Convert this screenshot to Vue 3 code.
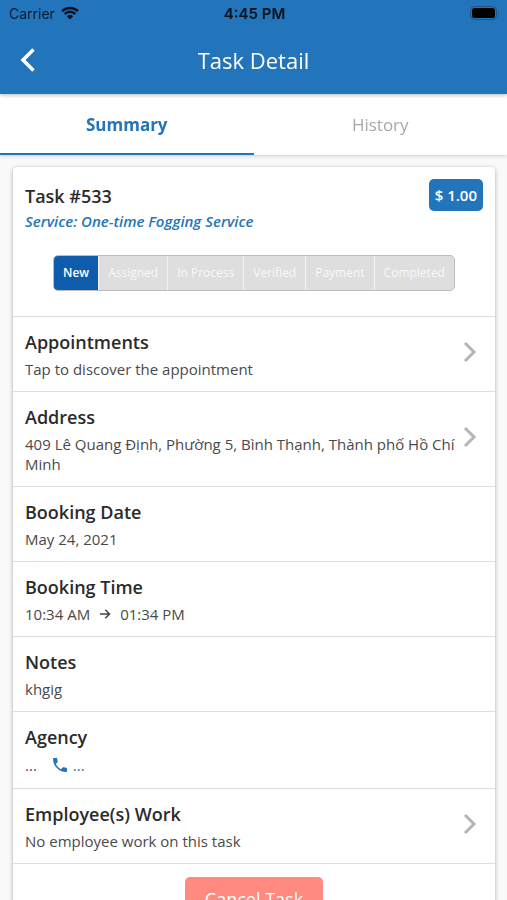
<template>
  <div class="screen">
    <header class="app-header">
      <div class="status-bar">
        <div class="status-left">
          <span>Carrier</span>
          <svg class="wifi" viewBox="0 0 18 14" aria-hidden="true">
            <path d="M1 5.2 A11.5 11.5 0 0 1 17 5.2" />
            <path d="M3.7 8 A7.6 7.6 0 0 1 14.3 8" />
            <path class="wifi-dot" d="M9 13.4 L5.9 10.3 A4.5 4.5 0 0 1 12.1 10.3 Z" />
          </svg>
        </div>
        <span class="status-time">4:45 PM</span>
        <div class="status-right">
          <svg class="battery" viewBox="0 0 30 14" aria-hidden="true">
            <rect x="0.5" y="0.5" width="26" height="13" rx="4" fill="none" stroke="#1a5488" />
            <rect x="2" y="2" width="23" height="10" rx="2.5" />
            <path d="M28 5 Q29.6 7 28 9 Z" fill="#1a5488" />
          </svg>
        </div>
      </div>
      <div class="nav-bar">
        <button class="back-btn" type="button" aria-label="Back">
          <svg viewBox="0 0 16 26" aria-hidden="true"><path d="M13.5 2.5 L3 13 L13.5 23.5" /></svg>
        </button>
        <h1 class="nav-title">Task Detail</h1>
      </div>
    </header>

    <nav class="tabs">
      <button
        v-for="tab in tabs"
        :key="tab"
        class="tab"
        :class="{ active: tab === activeTab }"
        type="button"
        @click="activeTab = tab"
      >{{ tab }}</button>
    </nav>

    <main class="content">
      <div class="card">
        <section class="summary">
          <div class="summary-head">
            <div>
              <h2 class="row-title">Task #533</h2>
              <div class="service">Service: One-time Fogging Service</div>
            </div>
            <span class="price">$ 1.00</span>
          </div>
          <ol class="steps">
            <li v-for="step in steps" :key="step" class="step" :class="{ current: step === currentStep }">{{ step }}</li>
          </ol>
        </section>

        <section v-for="row in rows" :key="row.title" class="row">
          <div class="row-main">
            <h2 class="row-title">{{ row.title }}</h2>
            <div v-if="row.type === 'time'" class="row-text time-range">
              <span>{{ row.from }}</span>
              <svg class="arrow" viewBox="0 0 12 12" aria-hidden="true"><path d="M1 6 H10.5 M6.3 1.8 L10.5 6 L6.3 10.2" /></svg>
              <span>{{ row.to }}</span>
            </div>
            <div v-else-if="row.type === 'agency'" class="row-text agency">
              <span>{{ row.text }}</span>
              <a class="phone" href="#">
                <svg viewBox="3 3 18 18" aria-hidden="true"><path d="M6.62 10.79c1.44 2.83 3.76 5.14 6.59 6.59l2.2-2.2c.27-.27.67-.36 1.02-.24 1.12.37 2.33.57 3.57.57.55 0 1 .45 1 1V20c0 .55-.45 1-1 1-9.39 0-17-7.61-17-17 0-.55.45-1 1-1h3.5c.55 0 1 .45 1 1 0 1.25.2 2.45.57 3.57.11.35.03.74-.25 1.02l-2.2 2.2z" /></svg>
                <span>{{ row.phone }}</span>
              </a>
            </div>
            <div v-else class="row-text">{{ row.text }}</div>
          </div>
          <button v-if="row.link" class="row-link" type="button" :aria-label="'Open ' + row.title">
            <svg viewBox="0 0 14 22" aria-hidden="true"><path d="M2 2 L11 11 L2 20" /></svg>
          </button>
        </section>

        <div class="actions">
          <button class="cancel-btn" type="button">Cancel Task</button>
        </div>
      </div>
    </main>
  </div>
</template>

<script setup>
import { ref } from 'vue';

const tabs = ['Summary', 'History'];
const activeTab = ref('Summary');

const steps = ['New', 'Assigned', 'In Process', 'Verified', 'Payment', 'Completed'];
const currentStep = 'New';

const rows = [
  { title: 'Appointments', text: 'Tap to discover the appointment', link: true },
  { title: 'Address', text: '409 Lê Quang Định, Phường 5, Bình Thạnh, Thành phố Hồ Chí Minh', link: true },
  { title: 'Booking Date', text: 'May 24, 2021' },
  { title: 'Booking Time', type: 'time', from: '10:34 AM', to: '01:34 PM' },
  { title: 'Notes', text: 'khgig' },
  { title: 'Agency', type: 'agency', text: '...', phone: '...' },
  { title: 'Employee(s) Work', text: 'No employee work on this task', link: true },
];
</script>

<style>
body { margin: 0; background: #f9f9f9; }
</style>

<style scoped>
* { box-sizing: border-box; }
h1, h2, ol { margin: 0; padding: 0; }
button { font-family: inherit; border: 0; background: none; padding: 0; cursor: pointer; }

.screen { display: flex; flex-direction: column; height: 100vh; overflow: hidden; font-family: "Open Sans", "Noto Sans", sans-serif; color: #222; }

.app-header { flex: none; background: #2375bb; box-shadow: 0 1px 4px rgba(0, 0, 0, 0.3); z-index: 2; }
.status-bar { display: grid; grid-template-columns: 1fr auto 1fr; align-items: center; height: 26px; padding: 0 7px 0 9px; font-family: Inter, sans-serif; font-size: 14px; color: #0b1a28; }
.status-left { display: flex; align-items: center; gap: 6px; }
.status-time { font-size: 15px; font-weight: 600; color: #061019; }
.status-right { display: flex; justify-content: flex-end; }
.wifi { width: 18px; height: 14px; fill: none; stroke: #07121c; stroke-width: 2.5; }
.wifi-dot { fill: #07121c; stroke: none; }
.battery { width: 30px; height: 14px; }
.nav-bar { display: grid; grid-template-columns: 40px 1fr 40px; align-items: center; height: 68px; padding: 0 8px; }
.back-btn { display: flex; align-items: center; justify-content: center; height: 40px; }
.back-btn svg { width: 16px; height: 26px; fill: none; stroke: #fff; stroke-width: 3.5; }
.nav-title { font-size: 22px; line-height: 30px; font-weight: 400; color: #fff; text-align: center; }

.tabs { flex: none; display: flex; background: #fff; box-shadow: 0 1px 4px rgba(0, 0, 0, 0.18); z-index: 1; }
.tab { flex: 1; height: 61px; padding-top: 2px; border-bottom: 2px solid transparent; font-size: 17px; color: #a8a8a8; }
.tab.active { border-bottom-color: #2375bb; font-weight: 700; color: #2375bb; }

.content { flex: 1; min-height: 0; overflow-y: auto; scrollbar-width: none; padding: 12px 12px 16px 13px; background: #f9f9f9; }
.card { background: #fff; border-radius: 4px; box-shadow: 0 1px 4px rgba(0, 0, 0, 0.32); }

.summary { padding: 12px 12px 25px; border-bottom: 1px solid #dedede; }
.summary-head { display: flex; justify-content: space-between; align-items: flex-start; }
.row-title { margin-top: 4px; font-size: 18px; line-height: 26px; font-weight: 600; color: #2b2b2b; }
.service { font-size: 15px; line-height: 24px; font-style: italic; font-weight: 600; color: #2375bb; }
.price { padding: 0 6px; border-radius: 5px; background: #2375bb; font-size: 15px; line-height: 32px; font-weight: 600; color: #fff; }
.steps { display: flex; width: fit-content; margin: 22px auto 0; overflow: hidden; border: 1px solid #bdbdbd; border-radius: 5px; background: #dedede; list-style: none; }
.step { padding: 0 9px; font-size: 12px; line-height: 34px; color: #f8f8f8; }
.step + .step { border-left: 1px solid #f4f4f4; }
.step.current { background: #0f5cad; font-weight: 600; color: #fff; }

.row { display: flex; align-items: center; gap: 2px; padding: 8px 13px 12px 12px; border-bottom: 1px solid #dedede; }
.row-main { flex: 1; min-width: 0; }
.row-text { margin-top: 4px; font-size: 15px; line-height: 20px; color: #4a4a4a; }
.row-link { flex: none; width: 24px; height: 24px; }
.row-link svg { display: block; width: 14px; height: 22px; margin: 0 auto; fill: none; stroke: #b5b5b5; stroke-width: 3; }
.time-range { display: flex; align-items: center; gap: 9px; }
.arrow { width: 12px; height: 12px; fill: none; stroke: #444; stroke-width: 1.5; }
.agency { display: flex; align-items: center; gap: 16px; line-height: 22px; }
.phone { display: flex; align-items: center; gap: 6px; color: #2375bb; text-decoration: none; }
.phone svg { width: 14px; height: 14px; fill: #2375bb; }

.actions { display: flex; justify-content: center; padding: 13px 12px 16px; }
.cancel-btn { padding: 0 20px; border-radius: 5px; background: #ff8a80; font-size: 18px; line-height: 44px; color: #fff; }
</style>
